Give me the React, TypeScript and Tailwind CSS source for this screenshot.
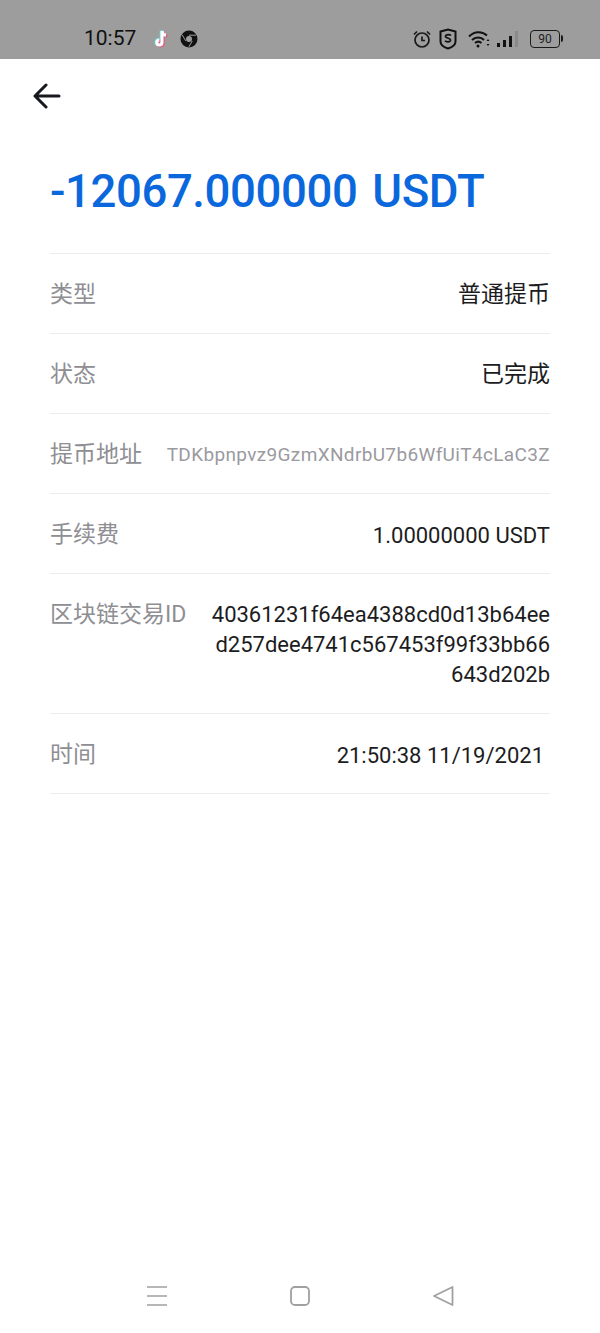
import type { ReactNode } from 'react';

const cjk = "font-['Roboto','Noto_Sans_CJK_SC',sans-serif]";

function TikTokIcon() {
  const d = 'M10 2v11.5a2.6 2.6 0 1 1-2.6-2.6M10 2c.3 2.4 1.8 3.9 4 4.2';
  return (
    <svg width="20" height="22" viewBox="0 0 20 20" fill="none" strokeWidth="3">
      <path d={d} stroke="#5fe3e0" transform="translate(-0.8 -0.6)" />
      <path d={d} stroke="#e8527a" transform="translate(1.2 0.8)" />
      <path d={d} stroke="#ffffff" />
    </svg>
  );
}

function ChromeIcon() {
  return (
    <svg width="18" height="18" viewBox="0 0 18 18">
      <circle cx="9" cy="9" r="8.5" fill="#111" />
      <circle cx="9" cy="9" r="3" fill="#9d9d9d" />
      <path d="M9 5.2h7M12.3 10.9l-3.5 6M5.7 10.9 2.2 4.8" stroke="#9d9d9d" strokeWidth="1" fill="none" />
    </svg>
  );
}

function StatusRight() {
  return (
    <div className="flex items-center">
      <svg width="20" height="20" viewBox="0 0 20 20" fill="none" stroke="#1a1a1a" strokeWidth="1.7">
        <circle cx="10" cy="11" r="7" />
        <path d="M10 7.5V11.5H13" />
        <path d="M2 5.5 5 2.5M18 5.5 15 2.5" />
      </svg>
      <svg className="ml-[7px]" width="18" height="22" viewBox="0 0 18 22" fill="none" stroke="#111" strokeWidth="2">
        <path d="M1.500 3.500 9 1.500l7.500 2v10c0 3.500-3.500 5.800-7.500 7-4-1.200-7.500-3.500-7.500-7z" />
        <path d="M12 7.500c-.8-1-4.800-1.500-5.500.5-.700 2.500 5.500 1.500 5 4.500-.5 2-4.500 1.700-5.500.3" strokeWidth="1.700" />
      </svg>
      <svg className="ml-[11px]" width="23" height="18" viewBox="0 0 23 18" fill="none" stroke="#111" strokeWidth="2">
        <path d="M1 6.500C6.500 1 14 1 19 5.500" />
        <path d="M4 10c3.500-3.500 9-3.500 12 0" />
        <path d="M7 13c2-1.700 4.500-1.700 6.500 0" />
        <circle cx="10" cy="16" r="1.500" fill="#111" stroke="none" />
        <path d="m20 9 1.500 2h-3zM20 16l1.500-2h-3z" fill="#111" stroke="none" />
      </svg>
      <div className="ml-[6px] flex h-[16px] items-end gap-[3px]">
        <span className="h-[4px] w-[3px] bg-[#111]" />
        <span className="h-[7px] w-[3px] bg-[#111]" />
        <span className="h-[11px] w-[3px] bg-[#111]" />
        <span className="h-[16px] w-[3px] bg-[#8a8a8a]" />
      </div>
      <div className="ml-[12px] flex items-center">
        <div className="flex h-[18px] w-[30px] items-center justify-center rounded-[4px] border-[1.5px] border-[#1a1a1a] text-[12px] text-[#222]">
          90
        </div>
        <span className="ml-[1px] h-[7px] w-[2px] rounded-r-sm bg-[#1a1a1a]" />
      </div>
    </div>
  );
}

function Row({ label, children, className = 'h-[80px] items-center pt-[3px]' }: { label: string; children: ReactNode; className?: string }) {
  return (
    <div className={`flex justify-between border-b border-[#ececec] ${className}`}>
      <span className="shrink-0 text-[23px] leading-[30px] text-[#8e8e93]">{label}</span>
      {children}
    </div>
  );
}

export default function App() {
  return (
    <div className={`flex h-[1333px] w-[600px] flex-col overflow-hidden bg-white ${cjk}`}>
      <div className="flex h-[59px] items-center justify-between bg-[#9d9d9d] pl-[84px] pr-[37px] pt-[18px]">
        <div className="flex items-center">
          <span className="text-[21px] text-[#111]">10:57</span>
          <span className="ml-[16px] flex"><TikTokIcon /></span>
          <span className="ml-[8px] flex"><ChromeIcon /></span>
        </div>
        <StatusRight />
      </div>

      <div className="flex h-[74px] items-center pl-[33px]">
        <svg width="28" height="26" viewBox="0 0 28 26" fill="none" stroke="#16181d" strokeWidth="3" strokeLinecap="round" strokeLinejoin="round">
          <path d="M26 13H2M13 2 2 13l11 11" />
        </svg>
      </div>

      <div className="px-[50px]">
        <h1 className="flex h-[120px] items-center pb-[2px] text-[45.500px] font-medium leading-none tracking-[-0.4px] [word-spacing:4px] text-[#0b68dc]">
          -12067.000000 USDT
        </h1>
        <div className="border-t border-[#ececec]">
          <Row label="类型"><span className="text-[23px] text-[#1c1c1e]">普通提币</span></Row>
          <Row label="状态"><span className="text-[23px] text-[#1c1c1e]">已完成</span></Row>
          <Row label="提币地址"><span className="text-[19px] tracking-[0.35px] text-[#9a9aa0]">TDKbpnpvz9GzmXNdrbU7b6WfUiT4cLaC3Z</span></Row>
          <Row label="手续费"><span className="text-[22px] text-[#1c1c1e]">1.00000000 USDT</span></Row>
          <Row label="区块链交易ID" className="h-[140px] items-start pt-[26px]">
            <span className="w-[340px] text-right text-[22px] leading-[30px] break-all text-[#1c1c1e]">
              40361231f64ea4388cd0d13b64ee<br />d257dee4741c567453f99f33bb66<br />643d202b
            </span>
          </Row>
          <Row label="时间"><span className="pr-[6px] text-[22px] text-[#1c1c1e]">21:50:38 11/19/2021</span></Row>
        </div>
      </div>

      <div className="mt-auto flex h-[76px] items-start justify-between px-[146px] pt-[28px]">
        <svg width="22" height="22" viewBox="0 0 22 22" stroke="#a0a0a0" strokeWidth="1.600">
          <path d="M1 2h20M1 11h20M1 20h20" />
        </svg>
        <svg width="22" height="22" viewBox="0 0 22 22" fill="none" stroke="#a0a0a0" strokeWidth="1.800">
          <rect x="2" y="2" width="18" height="18" rx="4" />
        </svg>
        <svg width="22" height="22" viewBox="0 0 22 22" fill="none" stroke="#a0a0a0" strokeWidth="1.800" strokeLinejoin="round">
          <path d="M20.500 2v18L2 11z" />
        </svg>
      </div>
    </div>
  );
}
